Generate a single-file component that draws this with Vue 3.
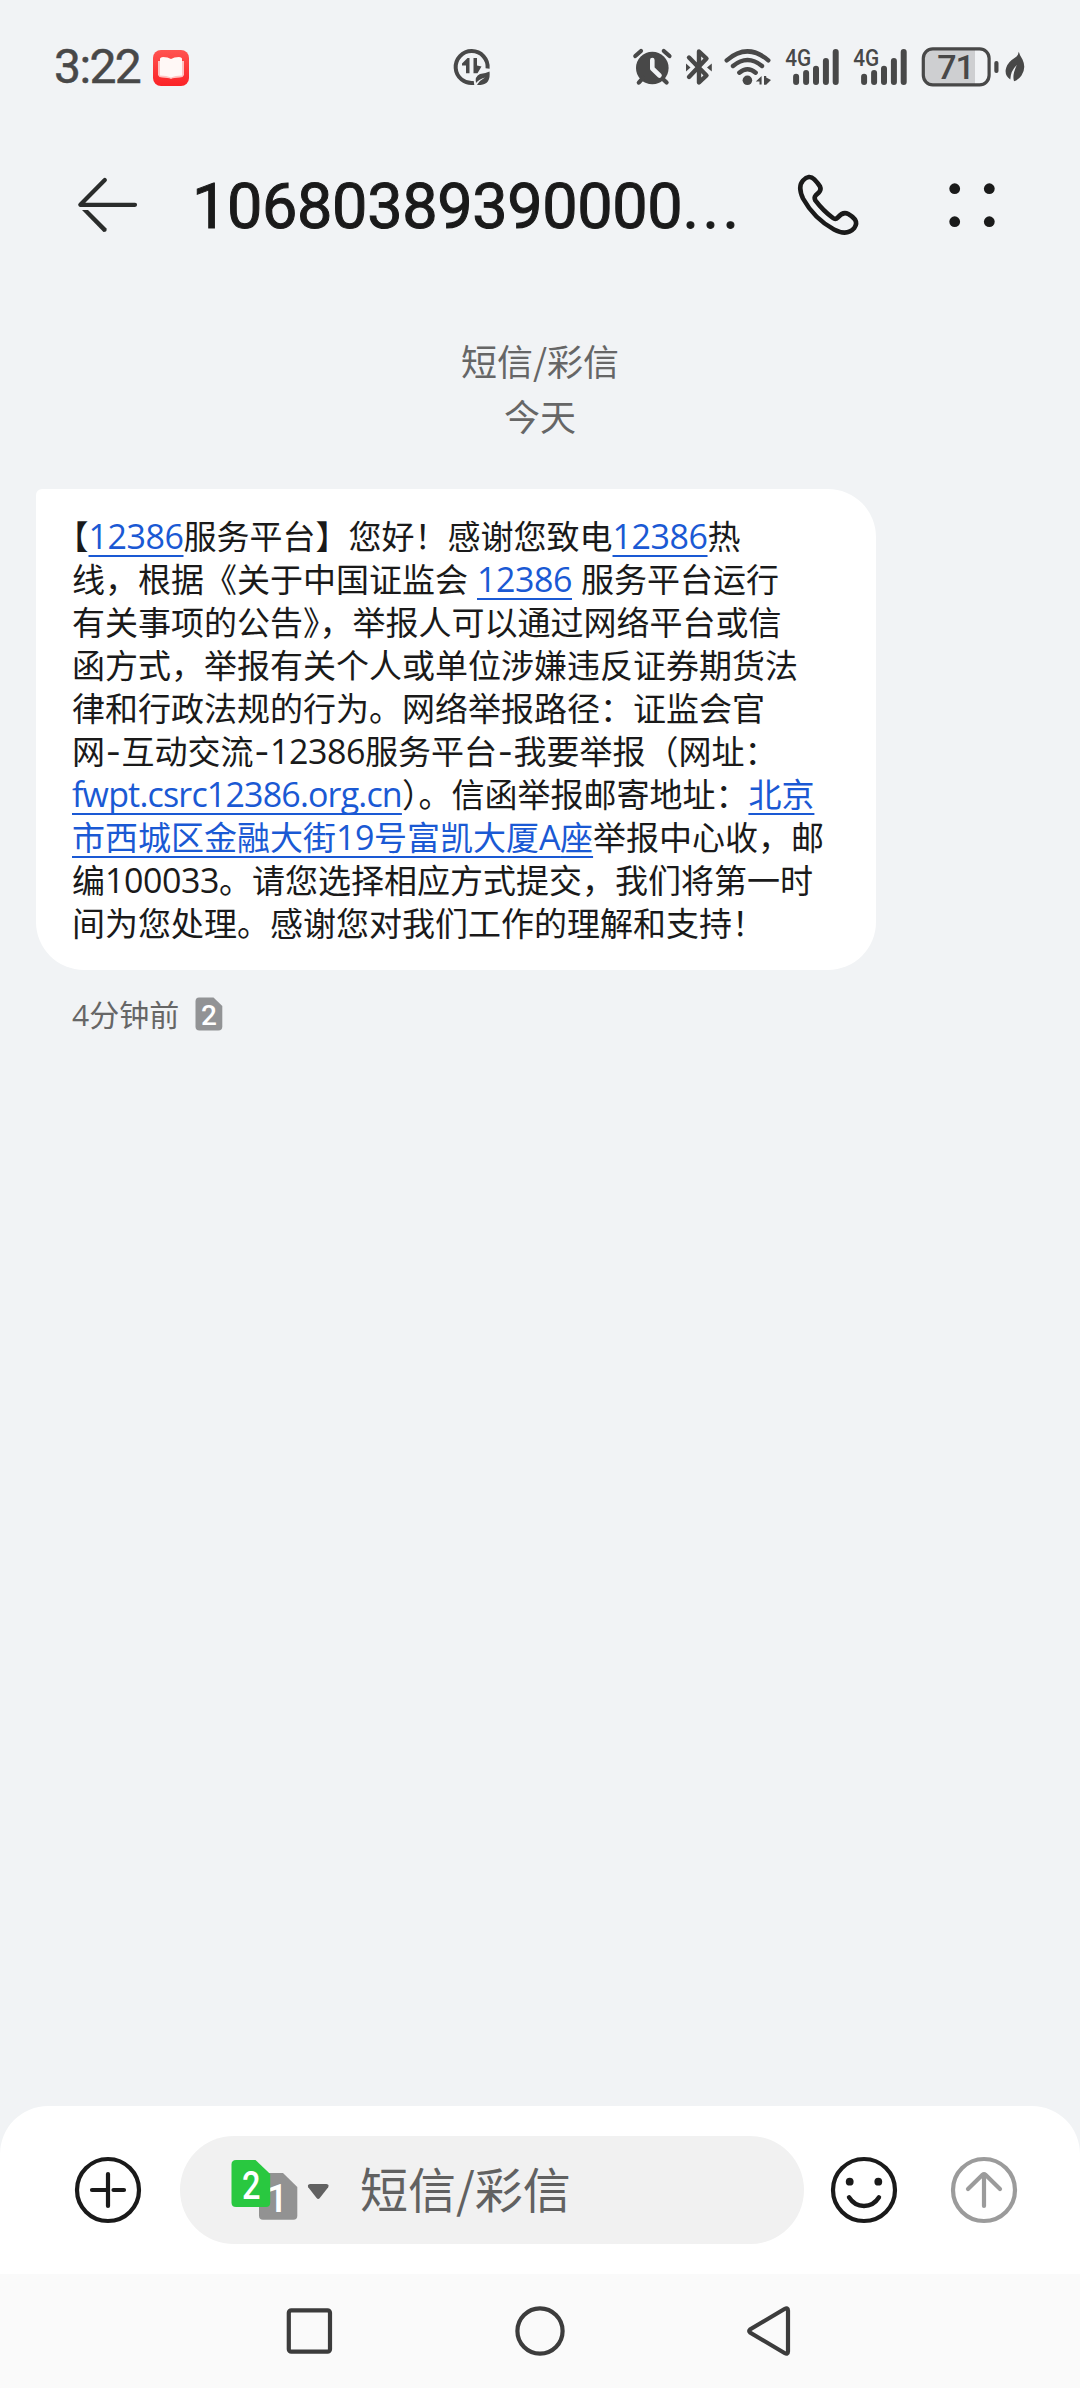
<template>
  <div class="screen">
    <!-- Status bar -->
    <div class="status-bar">
      <span class="clock">3:22</span>
      <svg class="app-badge" width="36" height="36" viewBox="0 0 36 36">
        <defs>
          <linearGradient id="badge-red" x1="0" y1="0" x2="0" y2="1">
            <stop offset="0" stop-color="#ff5350" />
            <stop offset="1" stop-color="#fb2226" />
          </linearGradient>
        </defs>
        <rect width="36" height="36" rx="8" fill="url(#badge-red)" />
        <path d="M5 11 L31 11 L31 25 Q30 27.5 27 27.5 Q21 27.5 18 29 Q15 27.5 9 27.5 Q6 27.5 5 25 Z" fill="#ffc4c2" />
        <path d="M7 8.5 Q7.5 7 10 7 Q15 7.2 18 9 Q21 7.2 26 7 Q28.5 7 29 8.5 L29 25.5 Q22 25.5 18 27.5 Q14 25.5 7 25.5 Z" fill="#fff8f6" />
      </svg>
      <svg class="data-saver" width="38" height="38" viewBox="0 0 38 38">
        <path d="M21 34.9 A16 16 0 1 1 34.6 20.5" fill="none" stroke="#484848" stroke-width="4" />
        <path d="M16.5 10 V25.3 H13 V17.5 H9 V15.5 L14.5 10 Z" fill="#484848" />
        <path d="M20.5 10 H24 V17.5 L28.5 18.5 L24.5 25.3 H20.5 Z" fill="#484848" />
        <path d="M36.5 23.5 Q38 36 27.5 37 Q25 37.2 24 36.8 Q26.5 32.5 32 29.5 Q26 31 23 35 Q21.5 28.5 27 26 Q33 25.2 36.5 23.5 Z" fill="#484848" />
      </svg>

      <div class="status-icons">
        <svg width="40" height="40" viewBox="633 47 40 40">
          <circle cx="652.3" cy="68" r="16.3" fill="#484848" />
          <path d="M635.3 56 L641 51 M663.8 51 L669.5 56 M638.8 82.6 L643 78 M661.8 78 L666.6 82.6" stroke="#484848" stroke-width="4.2" stroke-linecap="round" />
          <path d="M652.3 60 V68.5 L659.5 75.5" fill="none" stroke="#f1f3f5" stroke-width="4.6" stroke-linecap="round" stroke-linejoin="round" />
        </svg>
        <svg class="bluetooth" width="28" height="40" viewBox="685 47 28 40">
          <path d="M689 57.5 L706.5 75.5 L699 82.5 V51.5 L706.5 58.5 L689 77" fill="none" stroke="#484848" stroke-width="4.4" stroke-linecap="round" stroke-linejoin="round" />
          <path d="M686 63.5 L690.5 67.5 L686 71.5 Z M711.8 63.5 L707 67.5 L711.8 71.5 Z" fill="#484848" />
        </svg>
        <svg class="wifi" width="50" height="40" viewBox="723 47 50 40">
          <path d="M726.7 60.3 Q747.5 42.5 768.3 60.3 M733 66 Q747.5 54 762 66 M739.3 72.7 Q747.5 66 755.7 72.7" fill="none" stroke="#484848" stroke-width="4.4" stroke-linecap="round" />
          <circle cx="747.4" cy="80.3" r="4.8" fill="#484848" />
          <path d="M755.8 81.5 L761.6 76 V84.6 H759.5 V81.5 Z M764 76 H766.2 V77.5 L771 80 L766.2 84.8 H764 Z" fill="#484848" />
        </svg>
        <svg v-for="sim in 2" :key="sim" class="signal" width="54" height="40" viewBox="785 47 54 40">
          <text x="785.3" y="66.3" textLength="26" lengthAdjust="spacingAndGlyphs" class="net-label">4G</text>
          <path d="M796.1 76.8 V82 M806.1 73 V82 M816 68.8 V82 M825.9 61 V82 M835.7 52 V82" stroke="#484848" stroke-width="6" stroke-linecap="round" />
        </svg>
        <svg class="battery" width="78" height="40" viewBox="921 47 78 40">
          <path d="M975 50 H932 Q923.5 50 923.5 58 V76 Q923.5 84.3 932 84.3 H975 Z" fill="#cecfd1" />
          <rect x="923.3" y="48.8" width="65.8" height="36" rx="9.5" fill="none" stroke="#484848" stroke-width="3.2" />
          <rect x="994.3" y="61" width="4.2" height="12" rx="2" fill="#484848" />
          <text x="955.5" y="79" text-anchor="middle" class="battery-label">71</text>
        </svg>
        <svg class="leaf" width="20" height="32" viewBox="1005 51 20 32">
          <path d="M1018.8 51.8 Q1019.5 55 1022.5 59.5 Q1026.5 68 1021.5 75.5 Q1018.5 80 1014 81.2 Q1012 75 1016.8 65 Q1010.5 71 1010.3 79.5 Q1003.8 75 1006.3 67.5 Q1008 62 1014.5 58 Q1018.3 55.8 1018.8 51.8 Z" fill="#484848" />
        </svg>
      </div>
    </div>

    <!-- Conversation header -->
    <header class="header">
      <svg class="back" width="64" height="60" viewBox="76 175 64 60">
        <path d="M104.8 180 L80.3 204.8 H135" fill="none" stroke="#2a2c2b" stroke-width="4.2" stroke-linecap="round" stroke-linejoin="round" />
        <path d="M82 210 H88 L106.5 228.5 Q107.3 232 103.5 232 Z" fill="#2a2c2b" />
      </svg>
      <h1 class="title">10680389390000<span class="ellipsis">...</span></h1>
      <svg class="phone" width="64" height="64" viewBox="796 173 64 64">
        <path d="M803 180.5 Q809 174.2 814.3 179.3 Q818 183 820 186.5 Q821.5 189.8 818.8 192.5 L815.8 195.3 Q813.8 197.5 815.3 200.3 Q823 210.5 833 218 Q835.5 219.8 837.8 217.5 Q843 211 848.3 214 Q852 216 855 219.5 Q857.5 223.5 854.3 228 Q847 236.3 834 229.5 Q814 218.5 803 198.5 Q797.5 186.5 803 180.5 Z" fill="none" stroke="#1a1a1a" stroke-width="4.6" stroke-linejoin="round" />
      </svg>
      <svg class="more" width="48" height="48" viewBox="0 0 48 48">
        <circle v-for="dot in dots" :key="dot.join()" :cx="dot[0]" :cy="dot[1]" r="5.4" fill="#1a1a1a" />
      </svg>
    </header>

    <!-- Messages -->
    <main class="messages">
      <div class="day">
        <p>短信/彩信</p>
        <p>今天</p>
      </div>

      <div class="bubble">
        <p v-for="(line, i) in lines" :key="i" class="line">
          <span v-for="(run, j) in line" :key="j" :class="run.c">{{ run.t }}</span>
        </p>
      </div>

      <div class="meta">
        <span class="time"><span class="time-num">4</span>分钟前</span>
        <svg width="28" height="34" viewBox="0 0 28 34">
          <path d="M4 .5 H18.5 L27.3 9 V29.5 Q27.3 33.5 23.3 33.5 H4.5 Q.5 33.5 .5 29.5 V4.5 Q.5 .5 4 .5 Z" fill="#929395" />
          <text x="14" y="27.5" text-anchor="middle" class="sim-small">2</text>
        </svg>
      </div>
    </main>

    <!-- Composer -->
    <footer class="composer">
      <svg width="68" height="68" viewBox="0 0 68 68">
        <circle cx="34" cy="34" r="31" fill="none" stroke="#1a1a1a" stroke-width="4.2" />
        <path d="M34 18 V50 M18 34 H34 M39.5 34 H50" stroke="#1a1a1a" stroke-width="4.2" stroke-linecap="round" />
      </svg>
      <div class="input">
        <svg width="100" height="62" viewBox="230 2159 100 62">
          <path d="M263 2173 H283 L297.3 2187 V2215.7 Q297.3 2219.7 293.3 2219.7 H263 Q259 2219.7 259 2215.7 V2177 Q259 2173 263 2173 Z" fill="#929292" />
          <text x="266.5" y="2211.7" class="sim-one">1</text>
          <path d="M236 2160 H255.5 L270.2 2174 V2202.5 Q270.2 2207 266 2207 H236 Q231.5 2207 231.5 2202.5 V2164.5 Q231.5 2160 236 2160 Z" fill="#29c840" />
          <text x="242" y="2199" textLength="18.5" lengthAdjust="spacingAndGlyphs" class="sim-two">2</text>
          <path d="M310 2184 H326.5 Q329.5 2184.5 328.2 2187.2 L319.8 2198 Q318.2 2199.8 316.6 2198 L308.2 2187.2 Q307 2184.5 310 2184 Z" fill="#616161" />
        </svg>
        <span class="placeholder">短信/彩信</span>
      </div>
      <svg class="smile" width="68" height="68" viewBox="0 0 68 68">
        <circle cx="34" cy="34" r="31" fill="none" stroke="#1a1a1a" stroke-width="4.2" />
        <circle cx="19.7" cy="25.7" r="3.9" fill="#1a1a1a" />
        <circle cx="48.3" cy="25.7" r="3.9" fill="#1a1a1a" />
        <path d="M19 41.3 Q24.5 50 34 50 Q43.5 50 49 41.3" fill="none" stroke="#1a1a1a" stroke-width="4.4" stroke-linecap="round" />
      </svg>
      <svg class="send" width="68" height="68" viewBox="0 0 68 68">
        <circle cx="34" cy="34" r="31" fill="none" stroke="#9b9b9b" stroke-width="4.2" />
        <path d="M34 50 V18.2 M18 33 L32.5 18.8 Q34 17.4 35.5 18.8 L50 33" fill="none" stroke="#9b9b9b" stroke-width="4.2" stroke-linecap="round" />
      </svg>
    </footer>

    <!-- System navigation -->
    <nav class="nav">
      <svg width="52" height="52" viewBox="0 0 52 52">
        <rect x="4.8" y="5.3" width="41.2" height="41.4" rx="2.5" />
      </svg>
      <svg width="52" height="52" viewBox="0 0 52 52">
        <circle cx="26" cy="26" r="22.6" />
      </svg>
      <svg width="52" height="52" viewBox="744 2305 52 52">
        <path d="M784.5 2309 Q788 2307 788 2310.5 V2351.5 Q788 2355 784.5 2353 L750 2332.5 Q748.3 2331 750 2329.5 Z" />
      </svg>
    </nav>
  </div>
</template>

<script setup>
const dots = [
  [6.7, 7.7],
  [41.3, 7.7],
  [6.7, 40.7],
  [41.3, 40.7]
]

// Fragmentos de cada línea: n = números, link = enlace, half = puntuación de medio ancho
const lines = [
  [
    { t: '【', c: 'half' },
    { t: '12386', c: 'link n' },
    { t: '服务平台】您好！感谢您致电' },
    { t: '12386', c: 'link n' },
    { t: '热' }
  ],
  [
    { t: '线，根据《关于中国证监会' },
    { t: ' ', c: 'gap' },
    { t: '12386', c: 'link n' },
    { t: ' ', c: 'gap' },
    { t: '服务平台运行' }
  ],
  [
    { t: '有关事项的公告' },
    { t: '》', c: 'half' },
    { t: '，举报人可以通过网络平台或信' }
  ],
  [{ t: '函方式，举报有关个人或单位涉嫌违反证券期货法' }],
  [{ t: '律和行政法规的行为。网络举报路径：证监会官' }],
  [
    { t: '网' },
    { t: '-', c: 'dash' },
    { t: '互动交流' },
    { t: '-', c: 'dash' },
    { t: '12386', c: 'n' },
    { t: '服务平台' },
    { t: '-', c: 'dash' },
    { t: '我要举报（网址：' }
  ],
  [
    { t: 'fwpt.csrc12386.org.cn', c: 'link url' },
    { t: '）', c: 'half' },
    { t: '。信函举报邮寄地址：' },
    { t: '北京', c: 'link' }
  ],
  [
    { t: '市西城区金融大街', c: 'link' },
    { t: '19', c: 'link n' },
    { t: '号富凯大厦', c: 'link' },
    { t: 'A', c: 'link n' },
    { t: '座', c: 'link' },
    { t: '举报中心收，邮' }
  ],
  [
    { t: '编' },
    { t: '100033', c: 'n' },
    { t: '。请您选择相应方式提交，我们将第一时' }
  ],
  [{ t: '间为您处理。感谢您对我们工作的理解和支持！' }]
]
</script>

<style>
body {
  margin: 0;
  background: #f1f3f5;
}
</style>

<style scoped>
.screen {
  width: 1080px;
  height: 2388px;
  display: flex;
  flex-direction: column;
  background: #f1f3f5;
  color: #1a1a1a;
  font-family: "Noto Sans CJK SC", sans-serif;
  text-spacing-trim: space-all;
  overflow: hidden;
}

svg {
  display: block;
  flex-shrink: 0;
  overflow: visible;
}

p,
h1 {
  margin: 0;
}

/* Status bar */
.status-bar {
  height: 134px;
  box-sizing: border-box;
  padding: 47px 55px 0 54px;
  display: flex;
  align-items: flex-start;
}

.clock {
  width: 99px;
  line-height: 40px;
  font-family: Roboto, sans-serif;
  font-size: 48px;
  letter-spacing: -1.6px;
  color: #484848;
  -webkit-text-stroke: 0.5px #484848;
}

.app-badge {
  margin-top: 3px;
}

.data-saver {
  margin-left: 264px;
  margin-top: 1px;
}

.status-icons {
  display: flex;
  margin-left: auto;
}

.bluetooth {
  margin-left: 12px;
}

.wifi {
  margin-left: 10px;
}

.signal {
  margin-left: 12px;
}

.signal + .signal {
  margin-left: 14px;
}

.battery {
  margin-left: 14px;
}

.leaf {
  margin-left: 6px;
  margin-top: 4px;
}

.net-label {
  font-family: Roboto, sans-serif;
  font-size: 24px;
  font-weight: 500;
  fill: #484848;
}

.battery-label {
  font-family: Roboto, sans-serif;
  font-size: 34px;
  font-weight: 500;
  letter-spacing: -1px;
  fill: #484848;
}

/* Header */
.header {
  height: 142px;
  padding: 0 84px 0 76px;
  display: flex;
  align-items: center;
}

.title {
  width: 550px;
  margin-left: 52px;
  padding-top: 4px;
  font-family: Roboto, sans-serif;
  font-size: 63px;
  font-weight: 400;
  line-height: 72px;
  letter-spacing: -0.38px;
  white-space: nowrap;
  -webkit-text-stroke: 1px #1a1a1a;
}

.ellipsis {
  letter-spacing: 3.4px;
}

.phone {
  margin-left: 54px;
}

.more {
  margin-left: 88px;
}

/* Messages */
.messages {
  flex: 1;
  padding: 57px 36px 0;
}

.day {
  text-align: center;
  font-size: 36px;
  line-height: 55px;
  color: #666;
}

.bubble {
  width: 840px;
  height: 481px;
  box-sizing: border-box;
  margin-top: 46px;
  padding: 25px 36px 0;
  background: #fff;
  border-radius: 6px 48px 48px 48px;
  font-size: 33px;
}

.line {
  display: flex;
  align-items: baseline;
  height: 43px;
  line-height: 43px;
  white-space: pre;
}

.link {
  color: #1a59d4;
  text-decoration: underline;
  text-decoration-thickness: 2px;
  text-underline-offset: 6px;
  text-decoration-skip-ink: none;
}

.n {
  font-family: "Open Sans", sans-serif;
  font-size: 34px;
  letter-spacing: -0.44px;
}

.url {
  font-family: "Open Sans", sans-serif;
  font-size: 34px;
  letter-spacing: -0.83px;
}

.half {
  font-feature-settings: "halt" 1;
}

.gap {
  width: 9px;
}

.dash {
  width: 16.5px;
  text-align: center;
  font-family: Inter, sans-serif;
}

.meta {
  display: flex;
  align-items: center;
  gap: 16px;
  margin-top: 22px;
  padding-left: 36px;
  height: 44px;
}

.time {
  font-size: 30px;
  line-height: 44px;
  color: #666;
}

.time-num {
  font-family: "Open Sans", sans-serif;
}

.sim-small {
  font-family: Roboto, sans-serif;
  font-size: 28px;
  font-weight: 500;
  fill: #fff;
}

/* Composer */
.composer {
  height: 168px;
  box-sizing: border-box;
  padding: 0 62px 0 74px;
  display: flex;
  align-items: center;
  background: #fff;
  border-radius: 48px 48px 0 0;
}

.input {
  width: 624px;
  height: 108px;
  box-sizing: border-box;
  margin-left: 38px;
  padding-left: 50px;
  display: flex;
  align-items: center;
  border-radius: 54px;
  background: #f1f1f1;
}

.placeholder {
  margin-left: 30px;
  padding-bottom: 6px;
  font-size: 48px;
  color: #616161;
}

.sim-two,
.sim-one {
  font-family: Roboto, sans-serif;
  font-size: 38px;
  font-weight: 500;
  fill: #fff;
}

.smile {
  margin-left: 26px;
}

.send {
  margin-left: 52px;
}

/* Navigation */
.nav {
  height: 114px;
  display: flex;
  align-items: center;
  justify-content: center;
  gap: 178px;
  background: #fafafa;
}

.nav svg {
  fill: none;
  stroke: #3c3c3c;
  stroke-width: 4.2px;
}
</style>
